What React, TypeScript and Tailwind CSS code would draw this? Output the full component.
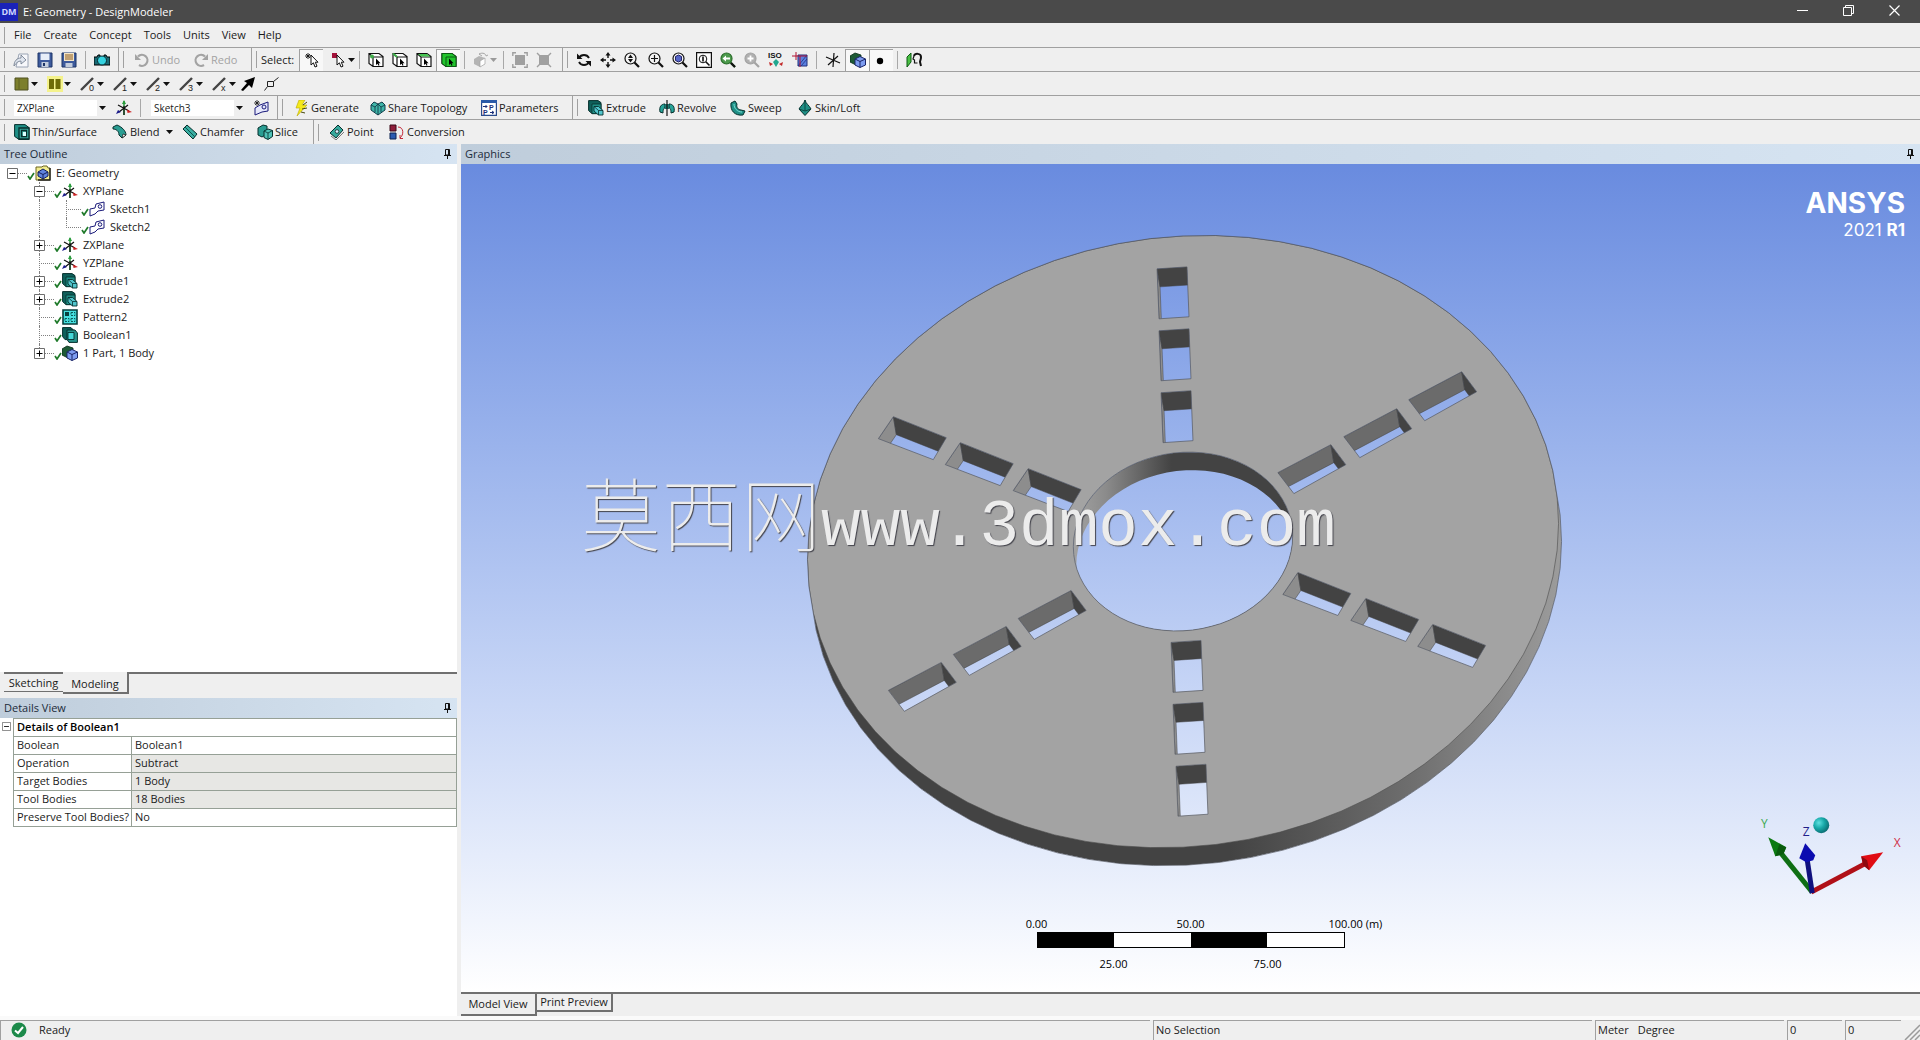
import type { ReactNode } from "react";

const TEAL = "#1f8f86";
const TEAL_DARK = "#0f5f5a";

function Svg({ children, className = "h-4 w-4" }: { children: ReactNode; className?: string }) {
  return (
    <svg viewBox="0 0 16 16" className={`${className} shrink-0`} fill="none" aria-hidden="true">
      {children}
    </svg>
  );
}

function Lens({ color = "#111", fill = "#f4f4f4", children }: { color?: string; fill?: string; children?: ReactNode }) {
  return (
    <Svg>
      <circle cx="6.5" cy="6.5" r="5.5" fill={fill} stroke={color} strokeWidth="1.2" />
      <path d="M10.5 10.5 15 15" stroke={color} strokeWidth="2.2" />
      {children}
    </Svg>
  );
}

function BoxPick({ face }: { face: ReactNode }) {
  return (
    <Svg>
      <path d="M1 1.5h10l4 3v10H5l-4-3zM5 5h10M5 5v9.5M5 5 1 1.5" stroke="#111" strokeWidth="1.2" fill="#fff" />
      {face}
      <path d="M8 6.5v6.5l1.6-1.3.9 2 1-.5-.9-1.9h2z" fill="#000" />
    </Svg>
  );
}

function Line({ mark }: { mark: string }) {
  return (
    <Svg>
      <path d="M1 14 13 2" stroke="#444" strokeWidth="2.4" />
      <text x="9" y="15" fontSize="9" fill="#222" fontFamily="Liberation Sans, sans-serif">
        {mark}
      </text>
    </Svg>
  );
}

const ICONS: Record<string, ReactNode> = {
  newSketch: (
    <Svg>
      <path d="M6 2h9v13H3z" fill="#f7f8fb" stroke="#9aa4b4" />
      <path d="M1 14c0-5 3-8 7-8V3l5 5-5 4V9c-3 0-5 2-7 5z" fill="#dfe5ee" stroke="#6b7688" strokeWidth=".8" />
    </Svg>
  ),
  save: (
    <Svg>
      <path d="M1 1h14v14H1z" fill="#3d5a9c" stroke="#1d3467" />
      <path d="M3.500 1.500h9V8h-9z" fill="#e8eef8" />
      <path d="M4.500 10h7v5h-7z" fill="#c3cddd" />
      <path d="M6 11h2v3H6z" fill="#1d3467" />
    </Svg>
  ),
  saveAs: (
    <Svg>
      <path d="M1 1h14v14H1z" fill="#3d5a9c" stroke="#1d3467" />
      <path d="M3 1h10v8H3z" fill="#f4e6c8" />
      <path d="M4 3h8M4 5h8M4 7h8" stroke="#8c5a1c" />
      <path d="M4.500 11h7v4h-7z" fill="#c3cddd" />
    </Svg>
  ),
  camera: (
    <Svg>
      <path d="M0 5h3l1-2h2v2h4V3h2l1 2h3v8H0z" fill="#1a6a74" stroke="#000" />
      <circle cx="8" cy="8.500" r="4.500" fill="#35d3e0" stroke="#0a2a30" />
    </Svg>
  ),
  undo: (
    <Svg>
      <path d="M4 4.500a5.500 5.500 0 1 1 1 8.500" stroke="#a3a3a3" strokeWidth="2.200" />
      <path d="M1 2v6h6z" fill="#a3a3a3" />
    </Svg>
  ),
  redo: (
    <Svg>
      <path d="M12 4.500a5.500 5.500 0 1 0-1 8.500" stroke="#a3a3a3" strokeWidth="2.200" />
      <path d="M15 2v6H9z" fill="#a3a3a3" />
    </Svg>
  ),
  pick: (
    <Svg>
      <path d="M4 1v6M1 4h6M2 2l4 4M6 2 2 6" stroke="#111" strokeWidth=".9" />
      <path d="M7 3v10l2.400-2.200L11 15l2-.8-1.700-4H14z" fill="#fff" stroke="#111" />
    </Svg>
  ),
  pickMode: (
    <Svg>
      <path d="M1 1h5v5H1z" fill="#a3123a" />
      <path d="M6 3v10l2.400-2.200L10 15l2-.8-1.700-4H13z" fill="#fff" stroke="#111" />
    </Svg>
  ),
  boxPoint: <BoxPick face={<circle cx="4" cy="4.500" r="2" fill="#3fae49" />} />,
  boxEdge: <BoxPick face={<path d="M1 1.500 5 5" stroke="#3fae49" strokeWidth="2" />} />,
  boxFace: <BoxPick face={<path d="M2 2h9l3.500 2.500H5z" fill="#46c552" />} />,
  boxBody: <BoxPick face={<path d="M1 1.500h10l4 3v10H5l-4-3zM5 5h10M5 5v9.500" fill="#23c52e" stroke="#0b5d12" />} />,
  grayCube: (
    <Svg>
      <path d="M1 7l5-3 6 2v6l-5 3-6-3z" fill="#b4b4b4" />
      <path d="M7 9l5-3v6l-5 3z" fill="#fff" stroke="#a5a5a5" strokeWidth=".7" />
      <path d="M6 2c4-2 7 0 7 2l2-1M6 2l3 2" stroke="#a5a5a5" />
    </Svg>
  ),
  expandSel: (
    <Svg>
      <path d="M3 3h10v10H3z" fill="#a0a0a0" />
      <path d="M.8 4V.8H4M12 .8h3.200V4M15.200 12v3.200H12M4 15.200H.8V12" stroke="#a0a0a0" strokeWidth="1.400" />
    </Svg>
  ),
  shrinkSel: (
    <Svg>
      <path d="M3 3h10v10H3z" fill="#a0a0a0" />
      <path d="M1 1l4 4M15 1l-4 4M15 15l-4-4M1 15l4-4" stroke="#a0a0a0" strokeWidth="1.400" />
    </Svg>
  ),
  rotate: (
    <Svg>
      <path d="M3 6c2-4 8-4 10 0M13 10c-2 4-8 4-10 0" stroke="#111" strokeWidth="1.800" />
      <path d="M1 1.500v5.500h5.500zM15 14.500V9H9.500z" fill="#111" />
    </Svg>
  ),
  pan: (
    <Svg>
      <path d="M8 3v3M8 10v3M3 8h3M10 8h3" stroke="#111" strokeWidth="1.400" />
      <path d="M8 0l2.500 3.500h-5zM8 16l2.500-3.500h-5zM0 8l3.500-2.500v5zM16 8l-3.500-2.500v5z" fill="#111" />
    </Svg>
  ),
  zoom: (
    <Lens>
      <path d="M6.500 2.500 9 6H4zM6.500 10.500 9 7H4z" fill="#111" />
    </Lens>
  ),
  zoomIn: (
    <Lens>
      <path d="M6.500 3v7M3 6.500h7" stroke="#111" strokeWidth="1.200" />
    </Lens>
  ),
  zoomBody: (
    <Lens>
      <path d="M6.500 3 9.500 4.500v4l-3 1.500-3-1.500v-4z" fill="#5566c8" stroke="#22226a" />
    </Lens>
  ),
  zoomBox: (
    <Svg>
      <path d="M.6.6h14.800v14.800H.6z" stroke="#111" strokeWidth="1.200" fill="#fff" />
      <circle cx="7" cy="7" r="3.800" stroke="#111" />
      <path d="M7 4.500v5M9.800 9.800 13.500 13.500" stroke="#111" strokeWidth="1.600" />
    </Svg>
  ),
  zoomPrev: (
    <Lens color="#2b6e2b" fill="#4c9a4c">
      <path d="M2.500 6.500 6 3.500v2h4v2H6v2z" fill="#fff" />
      <path d="M11 11l4 4" stroke="#111" strokeWidth="2.200" />
    </Lens>
  ),
  zoomNext: (
    <Lens color="#a3a3a3" fill="#b0b0b0">
      <path d="M6.500 3.500v6M3.500 6.500h6" stroke="#fff" strokeWidth="1.800" />
    </Lens>
  ),
  iso: (
    <Svg>
      <text x="0" y="6" fontSize="8" fontWeight="700" fill="#111" fontFamily="Liberation Sans, sans-serif">
        ISO
      </text>
      <path d="M8 7l3 3-3 5-3-5z" fill="#22a78f" />
      <path d="M1 10l4 2-3 2zM15 10l-4 2 3 2z" fill="#c22a2a" />
    </Svg>
  ),
  plane: (
    <Svg>
      <path d="M6 3h9v11H6z" fill="#5a7fe0" stroke="#20307c" />
      <path d="M6 14 15 3M9 14l6-7" stroke="#20307c" strokeWidth=".8" />
      <path d="M4 0v8M0 4h15M8 4v11" stroke="#b01030" />
    </Svg>
  ),
  cross: (
    <Svg>
      <path d="M9 1 8 15M1 5l14 6M13 4 3 13" stroke="#111" strokeWidth="1.200" />
    </Svg>
  ),
  part: (
    <Svg>
      <path d="M0 4l5-3 6 2v7l-5 3-6-3z" fill="#1d5a35" stroke="#062b16" strokeWidth=".8" />
      <path d="M5 7l5-2.500L15.500 7v6L10 15.500 5 13z" fill="#7d9cf0" stroke="#1a2468" />
      <path d="M5 7l5 2.500L15.500 7M10 9.500v6" stroke="#1a2468" />
    </Svg>
  ),
  dot: (
    <Svg>
      <circle cx="6" cy="9" r="3.200" fill="#000" />
    </Svg>
  ),
  lookAt: (
    <Svg>
      <path d="M1 5l4-4v9l-4 5z" fill="#49c043" stroke="#0d5a12" />
      <path d="M8 4c1-3 7-3 7 1 0 3-1 3-1 5l1 4" stroke="#111" strokeWidth="2" />
      <path d="M8 4 7 7l1.500 1v3h3" stroke="#111" strokeWidth="1.200" />
    </Svg>
  ),
  olive: (
    <Svg>
      <path d="M1 2h13v12H1z" fill="#7c7f2c" stroke="#4e5120" />
      <path d="M5 3v10" stroke="#5f6322" />
    </Svg>
  ),
  oliveGlow: (
    <Svg>
      <path d="M0 0h16v16H0z" fill="#f7f34a" opacity=".6" />
      <path d="M2 3h5v10H2zM8.500 3h5v10h-5z" fill="#6e6c08" />
    </Svg>
  ),
  line0: <Line mark="0" />,
  line1: <Line mark="1" />,
  line2: <Line mark="2" />,
  line3: <Line mark="3" />,
  lineX: <Line mark="x" />,
  arrow: (
    <Svg>
      <path d="M15 1 4 5l3 2-6 7 2 1 6-6 3 3z" fill="#000" />
    </Svg>
  ),
  vertex: (
    <Svg>
      <path d="M3.500 5.500h6v5h-6zM9.500 5.500l5-4M3.500 10.500l-3 4" stroke="#222" />
    </Svg>
  ),
  axes: (
    <Svg>
      <path d="M8 1v14" stroke="#1b8d2f" strokeWidth="1.400" />
      <path d="M2 5l11 6M12 5 3 12" stroke="#111" strokeWidth="1.200" />
      <path d="M8 0l2 4H6z" fill="#2a9d3c" />
      <path d="M16 12l-5-2.500.5 3.500z" fill="#c22" />
      <path d="M0 14l2-4 3 2z" fill="#1a1a8a" />
      <path d="M8 6v9" stroke="#111" strokeWidth="1.200" />
    </Svg>
  ),
  sketch: (
    <Svg>
      <path d="M1 8l5-1 1-4 8-2v8l-6 1-3 3-5 2z" stroke="#1a1a7a" fill="#fff" />
      <circle cx="11" cy="5.500" r="1.800" stroke="#1a1a7a" />
    </Svg>
  ),
  newSketchPlane: (
    <Svg>
      <path d="M2 8l5-3 8-3v9l-6 1-7 3z" stroke="#1a1a7a" fill="#e6e8fb" />
      <circle cx="11" cy="7" r="2" stroke="#1a1a7a" />
      <path d="M4 0v6M1 3h6M2 1l4 4M6 1 2 5" stroke="#111" strokeWidth=".8" />
    </Svg>
  ),
  bolt: (
    <Svg>
      <path d="M6 0h6l-3 5h5L4 16l3-8H3z" fill="#f5ea1a" stroke="#b8a800" strokeWidth=".6" />
      <path d="M14 2l-4 3M14 8l-5 1M12 13l-4-1" stroke="#4a4a10" />
    </Svg>
  ),
  share: (
    <Svg>
      <path d="M1 5l3-3 4 2 4-2 3 3v5l-7 5-7-5z" fill="#3fb5a8" stroke="#123d4a" />
      <path d="M1 5l4 2 3-3 3 3 4-2M5 7v5M11 7v5M8 4v11" stroke="#123d4a" strokeWidth=".9" />
    </Svg>
  ),
  params: (
    <Svg>
      <path d="M.6.6h14.800v14.800H.6z" fill="#fff" stroke="#2a4a8c" strokeWidth="1.200" />
      <path d="M0 0h16v3H0z" fill="#2a5aa8" />
      <text x="8" y="10" fontSize="7" fontWeight="700" fill="#1a2f7a" fontFamily="Liberation Sans, sans-serif">
        P
      </text>
      <text x="2" y="15" fontSize="7" fontWeight="700" fill="#1a2f7a" fontFamily="Liberation Sans, sans-serif">
        P
      </text>
      <path d="M2 6.500h4M4.500 5l1.500 1.500L4.500 8M9 12.500h4M11 11l2 1.500-2 1.500" stroke="#1a2f7a" />
    </Svg>
  ),
  extrude: (
    <Svg>
      <path d="M.6.6H10l3 2v11H4l-3.400-3z" fill={TEAL_DARK} stroke="#062f2c" />
      <path d="M4 4h9v9.600H4z" fill={TEAL} stroke="#062f2c" strokeWidth=".8" />
      <path d="M6 6.500h4.500l4.500 4V15h-4.500L6 11z" fill="#52c5cd" stroke="#06302e" strokeWidth=".9" />
      <path d="M10.500 10.500H15M10.500 10.500V15M10.500 10.500 6 6.500" stroke="#06302e" strokeWidth=".8" />
    </Svg>
  ),
  revolve: (
    <Svg>
      <path d="M1 12c-1-5 1-8 5-8v4c-1 0-2 1-2 5zM15 12c1-5-1-8-5-8v4c1 0 2 1 2 5z" fill="#27a398" stroke="#062f2c" />
      <path d="M6 4h4v5H6z" fill="#1c776f" />
      <path d="M8 0v16" stroke="#111" strokeWidth="1.200" />
    </Svg>
  ),
  sweep: (
    <Svg>
      <path d="M1 3l4-2 2 3c-1 3 1 6 4 6l4 1-2 4C5 16 0 11 1 3z" fill="#1f8f86" stroke="#062f2c" />
      <path d="M4 4c0 4 3 8 8 8" stroke="#7de0d6" />
    </Svg>
  ),
  loft: (
    <Svg>
      <path d="M8 0c1 4 4 5 6 9l-6 6.500L2 9c2-4 5-5 6-9z" fill="#1f8f86" stroke="#062f2c" />
      <path d="M2 9l6 2 6-2M8 0v11" stroke="#0a4a44" />
    </Svg>
  ),
  thin: (
    <Svg>
      <path d="M.6.6H11l4 3v11.800H5l-4.400-3z" fill={TEAL} stroke="#062f2c" />
      <path d="M5 4h10v11H5zM7.500 6.500h5v6h-5z" stroke="#062f2c" strokeWidth="1.300" fill="#3aa79d" />
      <path d="M9 8h3v4H9z" fill="#dff" />
    </Svg>
  ),
  blend: (
    <Svg>
      <path d="M1 3l4-2c5 2 9 6 9 10l-4 3-3-3c0-4-3-6-6-6z" fill="#2a9d92" stroke="#062f2c" />
      <path d="M10 14l4-3-3-1z" fill="#fff" stroke="#111" strokeWidth=".7" />
    </Svg>
  ),
  chamfer: (
    <Svg>
      <path d="M1 5l4-4 10 9-4 5z" fill="#3aaea2" stroke="#062f2c" />
      <path d="M3 3l10 10" stroke="#0d544e" />
    </Svg>
  ),
  slice: (
    <Svg>
      <path d="M1 4l5-3 4 1v8l-5 3-4-2z" fill="#2a9d92" stroke="#062f2c" />
      <path d="M7 7l4-2 4.500 1.500v6L11 15.500 7 13.500z" fill="#4fc2b6" stroke="#062f2c" />
      <path d="M7 7l4 2 4.500-2.500M11 9v6" stroke="#062f2c" strokeWidth=".8" />
    </Svg>
  ),
  point: (
    <Svg>
      <path d="M1 9 9 1l5 5-7 8z" fill="#36a99d" stroke="#062f2c" />
      <path d="M2 12l5 4 8-8" stroke="#777" />
      <circle cx="8" cy="7.500" r="1.800" fill="#d8f0ff" stroke="#111" strokeWidth=".7" />
    </Svg>
  ),
  conversion: (
    <Svg>
      <path d="M1 1h6v6H1z" fill="#8f1d3a" stroke="#3a0a18" />
      <path d="M1 9h6v6H1z" fill="#2a5ab0" stroke="#0c2250" />
      <path d="M9 3c6 0 6 8 2 11M11 11v3.500h3" stroke="#c22a3a" />
    </Svg>
  ),
  root: (
    <Svg>
      <path d="M1 2h6l1-1h4l1 2h2v12H1z" fill="#f2ec8e" stroke="#6b6420" />
      <path d="M3 7l5-3 5 3v4l-5 3-5-3z" fill="#5f83de" stroke="#15205e" />
      <path d="M3 7l5 2.500L13 7M8 9.500V14" stroke="#15205e" />
      <path d="M15 3v12H3" stroke="#222" strokeWidth="1.400" />
    </Svg>
  ),
  pattern: (
    <Svg>
      <path d="M1 1h14v14H1z" fill="#46e0e0" stroke="#083e3c" strokeWidth="1.600" />
      <path d="M3 3h4v4H3z" fill="#06403e" />
      <path d="M9 3.500h4v3H9zM3 9.500h4v3H3zM9 9.500h4v3H9z" stroke="#0a5a58" strokeDasharray="2 1" />
    </Svg>
  ),
  boolean: (
    <Svg>
      <path d="M.6.6H9l3 3v9H3l-2.400-3z" fill={TEAL_DARK} stroke="#062f2c" />
      <path d="M5 3h8l2.400 3v9.400H7l-2-3z" fill="#27928a" stroke="#062f2c" />
      <path d="M6 5.500h6v7H6z" fill="#45d6d6" stroke="#062f2c" strokeWidth=".9" />
    </Svg>
  ),
};

function Caret({ muted }: { muted?: boolean }) {
  return (
    <svg viewBox="0 0 7 4" className="h-1 w-[7px] shrink-0" aria-hidden="true">
      <path d="M0 0h7L3.500 4z" fill={muted ? "#9a9a9a" : "#111"} />
    </svg>
  );
}

function Grip() {
  return <span className="mx-1 h-[17px] w-px shrink-0 bg-[#a0a0a0]" />;
}

function Sep() {
  return <span className="mx-1 h-[18px] w-px shrink-0 bg-[#a8a8a8]" />;
}

function GroupEnd() {
  return <span className="h-full w-px shrink-0 bg-[#a0a0a0]" />;
}

function Tool({ icon, label, caret, muted, pressed }: { icon: string; label: string; caret?: boolean; muted?: boolean; pressed?: boolean }) {
  return (
    <button
      type="button"
      aria-label={label}
      className={`flex h-[22px] shrink-0 items-center ${caret ? "w-7 gap-px pl-1" : "w-6 justify-center"} ${
        pressed ? "border-t border-l border-[#a0a0a0] bg-[#f8f8f8]" : ""
      }`}
    >
      {ICONS[icon]}
      {caret && <Caret muted={muted} />}
    </button>
  );
}

function TextTool({ icon, label, width, caret, muted }: { icon: string; label: string; width: string; caret?: boolean; muted?: boolean }) {
  return (
    <button type="button" disabled={muted} className={`flex h-[22px] shrink-0 items-center gap-0.5 ${width} ${muted ? "text-[#a3a3a3]" : ""}`}>
      {ICONS[icon]}
      <span className="whitespace-nowrap">{label}</span>
      {caret && (
        <span className="ml-1">
          <Caret />
        </span>
      )}
    </button>
  );
}

function Combo({ label, value }: { label: string; value: string }) {
  return (
    <div className="relative h-4 w-[92px] shrink-0">
      <select aria-label={label} defaultValue={value} className="h-4 w-[83px] appearance-none bg-white pl-[3px] text-[10px] leading-4 outline-none">
        <option>{value}</option>
      </select>
      <span className="pointer-events-none absolute top-1.5 right-0 flex">
        <Caret />
      </span>
    </div>
  );
}

const MENUS = ["File", "Create", "Concept", "Tools", "Units", "View", "Help"];

function TitleBar() {
  return (
    <header className="flex h-[23px] items-center justify-between bg-[#4a4a4a] text-white">
      <div className="flex items-center">
        <span className="flex h-[18px] w-[18px] items-center justify-center bg-[#1a22b8] text-[9px] font-bold text-[#cfd6ff]">DM</span>
        <h1 className="ml-[5px] text-[11px]">E: Geometry - DesignModeler</h1>
      </div>
      <div className="flex h-full items-center pr-[3px] pb-[3px]">
        <button type="button" aria-label="Minimize" className="flex w-[46px] justify-center">
          <svg viewBox="0 0 11 11" className="h-[11px] w-[11px]" fill="none"><path d="M0 5.500h11" stroke="#fff" /></svg>
        </button>
        <button type="button" aria-label="Restore" className="flex w-[46px] justify-center">
          <svg viewBox="0 0 11 11" className="h-[11px] w-[11px]" fill="none"><path d="M.5 2.500h8v8h-8zM2.500 2.500v-2h8v8h-2" stroke="#fff" /></svg>
        </button>
        <button type="button" aria-label="Close" className="flex w-[46px] justify-center">
          <svg viewBox="0 0 11 11" className="h-[11px] w-[11px]" fill="none"><path d="M.5.5l10 10M10.500.5l-10 10" stroke="#fff" strokeWidth="1.200" /></svg>
        </button>
      </div>
    </header>
  );
}

function Toolbars() {
  return (
    <div className="bg-[#efefef]">
      <nav className="flex h-[25px] items-center border-b border-[#a0a0a0]">
        <Grip />
        <div className="flex gap-3 pl-[5px]">
          {MENUS.map((m) => (
            <button key={m} type="button">{m}</button>
          ))}
        </div>
      </nav>

      <div className="flex h-6 items-center border-b border-[#a0a0a0]">
        <Grip />
        <Tool icon="newSketch" label="New" />
        <Tool icon="save" label="Save" />
        <Tool icon="saveAs" label="Save As" />
        <Sep />
        <Tool icon="camera" label="Image Capture" />
        <span className="w-1" />
        <GroupEnd />
        <Grip />
        <span className="w-1.5" />
        <TextTool icon="undo" label="Undo" width="w-[59px]" muted />
        <TextTool icon="redo" label="Redo" width="w-[58px]" muted />
        <GroupEnd />
        <Grip />
        <span className="w-[38px]">Select:</span>
        <Tool icon="pick" label="New Selection" pressed />
        <span className="w-1" />
        <Tool icon="pickMode" label="Select Mode" caret />
        <Sep />
        <Tool icon="boxPoint" label="Points" />
        <Tool icon="boxEdge" label="Edges" />
        <Tool icon="boxFace" label="Faces" />
        <Tool icon="boxBody" label="Bodies" pressed />
        <Sep />
        <Tool icon="grayCube" label="Extend Selection" caret muted />
        <span className="w-0.5" />
        <Sep />
        <Tool icon="expandSel" label="Expand" />
        <Tool icon="shrinkSel" label="Shrink" />
        <span className="w-1.5" />
        <GroupEnd />
        <Grip />
        <Tool icon="rotate" label="Rotate" />
        <Tool icon="pan" label="Pan" />
        <Tool icon="zoom" label="Zoom" />
        <Tool icon="zoomIn" label="Box Zoom" />
        <Tool icon="zoomBody" label="Zoom to Body" />
        <Tool icon="zoomBox" label="Zoom to Fit" />
        <Tool icon="zoomPrev" label="Previous View" />
        <Tool icon="zoomNext" label="Next View" />
        <Tool icon="iso" label="ISO View" />
        <Tool icon="plane" label="Display Plane" />
        <Sep />
        <Tool icon="cross" label="Display Axes" />
        <Tool icon="part" label="Display Model" pressed />
        <Tool icon="dot" label="Display Points" pressed />
        <Sep />
        <Tool icon="lookAt" label="Look At" />
      </div>

      <div className="flex h-6 items-center border-b border-[#a0a0a0]">
        <Grip />
        <div className="flex gap-[5px] pl-px">
          <Tool icon="olive" label="Face Coloring" caret />
          <Tool icon="oliveGlow" label="Edge Coloring" caret />
          <Tool icon="line0" label="Edge 0" caret />
          <Tool icon="line1" label="Edge 1" caret />
          <Tool icon="line2" label="Edge 2" caret />
          <Tool icon="line3" label="Edge 3" caret />
          <Tool icon="lineX" label="Edge X" caret />
        </div>
        <Tool icon="arrow" label="Edge Direction" />
        <Tool icon="vertex" label="Display Vertices" />
      </div>

      <div className="flex h-6 items-center border-b border-[#a0a0a0]">
        <Grip />
        <span className="w-[5px]" />
        <Combo label="Plane" value="ZXPlane" />
        <span className="w-1.5" />
        <Tool icon="axes" label="New Plane" />
        <Sep />
        <span className="w-1.5" />
        <Combo label="Sketch" value="Sketch3" />
        <span className="w-1.5" />
        <Tool icon="newSketchPlane" label="New Sketch" />
        <span className="w-1" />
        <GroupEnd />
        <Grip />
        <span className="w-1.5" />
        <TextTool icon="bolt" label="Generate" width="w-[77px]" />
        <TextTool icon="share" label="Share Topology" width="w-[111px]" />
        <TextTool icon="params" label="Parameters" width="w-[91px]" />
        <GroupEnd />
        <Grip />
        <span className="w-1.5" />
        <TextTool icon="extrude" label="Extrude" width="w-[71px]" />
        <TextTool icon="revolve" label="Revolve" width="w-[71px]" />
        <TextTool icon="sweep" label="Sweep" width="w-[67px]" />
        <TextTool icon="loft" label="Skin/Loft" width="w-[70px]" />
      </div>

      <div className="flex h-6 items-center">
        <Grip />
        <span className="w-[5px]" />
        <TextTool icon="thin" label="Thin/Surface" width="w-[98px]" />
        <TextTool icon="blend" label="Blend" width="w-[70px]" caret />
        <TextTool icon="chamfer" label="Chamfer" width="w-[75px]" />
        <TextTool icon="slice" label="Slice" width="w-[56px]" />
        <GroupEnd />
        <Grip />
        <span className="w-1.5" />
        <TextTool icon="point" label="Point" width="w-[60px]" />
        <TextTool icon="conversion" label="Conversion" width="w-[80px]" />
      </div>
    </div>
  );
}

function PanelHeader({ title }: { title: string }) {
  return (
    <div className="flex h-5 shrink-0 items-center justify-between bg-linear-to-r from-[#bfcddb] to-[#d6e4f2] pr-1.5 pl-1 text-[#1c2b3a]">
      <h2>{title}</h2>
      <svg viewBox="0 0 7 10" className="h-2.5 w-[7px]" fill="none" aria-hidden="true">
        <path d="M1.500.5h4v5.500h-4zM0 6.500h7M3.500 6.500V10" stroke="#111" />
        <path d="M4.500 1v5" stroke="#111" />
      </svg>
    </div>
  );
}

type Node = { label: string; icon: string; level: number; box?: "+" | "-"; last?: boolean };

const TREE: Node[] = [
  { label: "E: Geometry", icon: "root", level: 0, box: "-" },
  { label: "XYPlane", icon: "axes", level: 1, box: "-" },
  { label: "Sketch1", icon: "sketch", level: 2 },
  { label: "Sketch2", icon: "sketch", level: 2, last: true },
  { label: "ZXPlane", icon: "axes", level: 1, box: "+" },
  { label: "YZPlane", icon: "axes", level: 1 },
  { label: "Extrude1", icon: "extrude", level: 1, box: "+" },
  { label: "Extrude2", icon: "extrude", level: 1, box: "+" },
  { label: "Pattern2", icon: "pattern", level: 1 },
  { label: "Boolean1", icon: "boolean", level: 1 },
  { label: "1 Part, 1 Body", icon: "part", level: 1, box: "+", last: true },
];

function ExpandBox({ sign, small }: { sign: "+" | "-"; small?: boolean }) {
  return (
    <svg viewBox="0 0 11 11" className={`relative shrink-0 ${small ? "h-[9px] w-[9px]" : "h-[11px] w-[11px]"}`} fill="none" aria-hidden="true">
      <path d="M.5.5h10v10H.5z" fill="#fff" stroke="#6e6e6e" />
      <path d={sign === "+" ? "M2.500 5.500h6M5.500 2.500v6" : "M2.500 5.500h6"} stroke="#000" />
    </svg>
  );
}

function TreeRow({ node }: { node: Node }) {
  return (
    <li className="flex h-[18px] items-center">
      {Array.from({ length: node.level }, (_, i) => (
        <span key={i} className="relative h-full w-[27px] shrink-0">
          {i === 1 && <span className="absolute inset-y-0 left-3 border-l border-dotted border-[#808080]" />}
        </span>
      ))}
      <span className="relative flex h-full w-[27px] shrink-0 items-center pl-[7px]">
        {node.level > 0 && (
          <span className={`absolute top-0 left-3 border-l border-dotted border-[#808080] ${node.last ? "h-2.5" : "h-full"}`} />
        )}
        <span className="absolute top-[9px] right-0 left-3 border-t border-dotted border-[#808080]" />
        {node.box && <ExpandBox sign={node.box} />}
      </span>
      <svg viewBox="0 0 8 8" className="mt-1.5 h-2 w-2 shrink-0" fill="none" aria-hidden="true">
        <path d="M1 4l2 3 4-6" stroke="#1f7a2a" strokeWidth="1.700" />
      </svg>
      {ICONS[node.icon]}
      <span className="ml-[5px] whitespace-nowrap">{node.label}</span>
    </li>
  );
}

const DETAILS = [
  { name: "Boolean", value: "Boolean1", locked: false },
  { name: "Operation", value: "Subtract", locked: true },
  { name: "Target Bodies", value: "1 Body", locked: true },
  { name: "Tool Bodies", value: "18 Bodies", locked: true },
  { name: "Preserve Tool Bodies?", value: "No", locked: false },
];

function SidePanel() {
  return (
    <aside className="flex w-[457px] shrink-0 flex-col">
      <PanelHeader title="Tree Outline" />
      <ul className="min-h-0 flex-1 bg-white">
        {TREE.map((n) => (
          <TreeRow key={n.label} node={n} />
        ))}
      </ul>
      <div className="flex h-[26px] shrink-0 items-start">
        <button type="button" className="ml-1 h-5 w-[59px] border-t-2 border-b border-[#707070] leading-4">Sketching</button>
        <button type="button" className="h-[22px] w-[66px] border-r-2 border-b-2 border-[#707070] pt-1 leading-4">Modeling</button>
        <span className="h-0.5 flex-1 bg-[#707070]" />
      </div>
      <PanelHeader title="Details View" />
      <div className="flex h-[298px] shrink-0 items-start bg-white">
        <button type="button" aria-label="Collapse" className="mt-1 ml-0.5 flex w-[11px]">
          <ExpandBox sign="-" small />
        </button>
        <table className="flex-1 border-collapse text-[11px] leading-[14px]">
          <thead>
            <tr className="h-[18px]">
              <th colSpan={2} className="border border-[#96a096] pt-0 pb-0.5 pl-[3px] text-left font-semibold text-black">Details of Boolean1</th>
            </tr>
          </thead>
          <tbody>
            {DETAILS.map((d) => (
              <tr key={d.name} className="h-[18px]">
                <td className="w-[118px] border border-[#96a096] pt-0 pb-0.5 pl-[3px] whitespace-nowrap">{d.name}</td>
                <td className={`border border-[#96a096] pt-0 pb-0.5 pl-[3px] ${d.locked ? "bg-[#e7e7e4]" : ""}`}>{d.value}</td>
              </tr>
            ))}
          </tbody>
        </table>
      </div>
    </aside>
  );
}

type Pt = [number, number];

const CENTER: Pt = [1183, 542];
const DEPTH: Pt = [3, 18];
const SEGMENTS = 72;

// Projected circle of the plate; k scales it down for the bore.
function ring(k: number): { p: Pt; facing: boolean }[] {
  const a = 376 * k;
  const skew = -18 * k;
  const h = 306 * k;
  return Array.from({ length: SEGMENTS }, (_, i) => {
    const t = (i / SEGMENTS) * Math.PI * 2;
    const c = Math.cos(t);
    const s = Math.sin(t);
    const nx = skew * -s + h * c;
    const ny = a * s;
    return {
      p: [CENTER[0] + a * c, CENTER[1] + skew * c + h * s] as Pt,
      facing: nx * DEPTH[0] + ny * DEPTH[1] > 0,
    };
  });
}

const shift = (p: Pt): Pt => [p[0] + DEPTH[0], p[1] + DEPTH[1]];
const path = (pts: Pt[]) => "M" + pts.map(([x, y]) => `${x.toFixed(1)} ${y.toFixed(1)}`).join("L") + "Z";

const OUTER = ring(1);
const BORE = ring(0.292);
const face = path(OUTER.map((o) => o.p));
const bore = path(BORE.map((o) => o.p));
const boreBack = path(BORE.map((o) => shift(o.p)));
const hull = path(OUTER.map((o) => (o.facing ? shift(o.p) : o.p)));

type SlotKind = { shape: Pt[]; walls: { edge: [number, number]; fill: string }[]; at: Pt[] };

const SLOTS: SlotKind[] = [
  {
    shape: [[0, 0], [30, -2], [32, 48], [2, 50]],
    walls: [{ edge: [3, 0], fill: "#8f8f8f" }, { edge: [0, 1], fill: "#434343" }],
    at: [[1157, 269], [1159, 331], [1161, 393], [1171, 643], [1173, 705], [1176, 767]],
  },
  {
    shape: [[0, 0], [53, -28], [68, -8], [16, 21]],
    walls: [{ edge: [0, 1], fill: "#6b6b6b" }, { edge: [1, 2], fill: "#434343" }],
    at: [[1409, 400], [1344, 437], [1278, 473], [1018, 619], [953, 655], [888, 691]],
  },
  {
    shape: [[0, 0], [53, 21], [40, 43], [-15, 22]],
    walls: [{ edge: [3, 0], fill: "#8d8d8d" }, { edge: [0, 1], fill: "#434343" }],
    at: [[893, 417], [960, 443], [1028, 469], [1298, 573], [1366, 599], [1433, 625]],
  },
];

const HOLES = SLOTS.flatMap((kind) =>
  kind.at.map(([x, y]) => ({ kind, quad: kind.shape.map(([dx, dy]) => [x + dx, y + dy] as Pt) })),
);

function Plate() {
  return (
    <svg viewBox="461 164 1459 829" className="absolute inset-0 h-full w-full" role="img" aria-label="Perforated disc">
      <defs>
        <linearGradient id="rim" gradientUnits="userSpaceOnUse" x1="807" y1="0" x2="1562" y2="0">
          <stop offset="0" stopColor="#434343" />
          <stop offset=".56" stopColor="#434343" />
          <stop offset=".8" stopColor="#6e6e6e" />
          <stop offset="1" stopColor="#9c9c9c" />
        </linearGradient>
        <linearGradient id="boreWall" gradientUnits="userSpaceOnUse" x1="1073" y1="0" x2="1292" y2="0">
          <stop offset="0" stopColor="#a3a3a3" />
          <stop offset=".15" stopColor="#8b8b8b" />
          <stop offset=".45" stopColor="#434343" />
          <stop offset="1" stopColor="#434343" />
        </linearGradient>
        <radialGradient id="ball" cx=".35" cy=".35" r=".7">
          <stop offset="0" stopColor="#5fe0e0" />
          <stop offset=".5" stopColor="#17a8a8" />
          <stop offset="1" stopColor="#0b6a70" />
        </radialGradient>
        <mask id="through">
          <path d={hull} fill="#fff" />
          <path d={bore} fill="#000" />
          {HOLES.map((h, i) => (
            <path key={i} d={path(h.quad)} fill="#000" />
          ))}
        </mask>
        {HOLES.map((h, i) => (
          <clipPath key={i} id={`hole${i}`}>
            <path d={path(h.quad)} />
          </clipPath>
        ))}
        <clipPath id="boreClip">
          <path d={bore} />
        </clipPath>
      </defs>

      <g mask="url(#through)">
        <path d={hull} fill="url(#rim)" />
        <path d={face} fill="#a3a3a3" stroke="#4c4c4c" strokeWidth=".6" />
      </g>
      <path d={hull} fill="none" stroke="#55585f" strokeWidth=".7" />

      <path d={bore + boreBack} fillRule="evenodd" fill="url(#boreWall)" clipPath="url(#boreClip)" />
      <path d={bore} fill="none" stroke="#55585f" strokeWidth=".7" />

      {HOLES.map(({ kind, quad }, i) => (
        <g key={i}>
          <g clipPath={`url(#hole${i})`}>
            {kind.walls.map((w) => {
              const [p, q] = [quad[w.edge[0]], quad[w.edge[1]]];
              return <path key={w.fill} d={path([p, q, shift(q), shift(p)])} fill={w.fill} stroke="#434343" strokeWidth=".5" />;
            })}
          </g>
          <path d={path(quad)} fill="none" stroke="#55585f" strokeWidth=".7" />
        </g>
      ))}

      {/* view triad */}
      <path d="M1813 893 1780 852" stroke="#0f6e14" strokeWidth="5" />
      <path d="M1769 838 1787 848 1784 855 1776 857z" fill="#0c7a12" />
      <path d="M1776 857 1780 845 1787 848 1784 855z" fill="#095a0d" />
      <path d="M1812 893 1867 864" stroke="#b01018" strokeWidth="5" />
      <path d="M1884 853 1862 857 1864 866 1870 871z" fill="#e00c14" />
      <path d="M1862 857 1868 861 1870 871 1864 866z" fill="#8e0a10" />
      <path d="M1813 894 1808 861" stroke="#10107e" strokeWidth="5" />
      <path d="M1806 844 1816 856 1814 861 1807 863 1800 859z" fill="#0c0cb0" />
      <circle cx="1822" cy="826" r="8" fill="url(#ball)" />
      <g fontFamily="Open Sans, sans-serif" fontSize="12" textAnchor="middle">
        <text x="1765" y="829" fill="#3aa850">Y</text>
        <text x="1807" y="837" fill="#20208a">Z</text>
        <text x="1898" y="848" fill="#d03048">X</text>
      </g>
    </svg>
  );
}

function ScaleBar() {
  return (
    <div className="absolute inset-x-0 bottom-5 mx-auto w-[308px] text-black">
      <div className="flex justify-between leading-4">
        <span className="flex w-0 justify-center">0.00</span>
        <span className="flex w-0 justify-center">50.00</span>
        <span className="w-0 whitespace-nowrap">
          <span className="-ml-4">100.00 (m)</span>
        </span>
      </div>
      <div className="grid h-4 grid-cols-4 border border-black bg-white">
        <span className="bg-black" />
        <span />
        <span className="bg-black" />
        <span />
      </div>
      <div className="mt-2 flex justify-around leading-4">
        <span>25.00</span>
        <span>75.00</span>
      </div>
    </div>
  );
}

function Graphics() {
  return (
    <main className="flex min-w-0 flex-1 flex-col">
      <PanelHeader title="Graphics" />
      <div className="relative min-h-0 flex-1 bg-linear-to-b from-[#698bdf] to-white">
        <Plate />
        <div className="absolute top-[22px] right-[15px] flex flex-col items-end font-[Inter,sans-serif] text-white">
          <div className="text-[28px] leading-[34px] font-bold">ANSYS</div>
          <div className="text-[17px] leading-5">
            2021 <b>R1</b>
          </div>
        </div>
        <div className="absolute inset-x-0 top-[306px] mr-[464px] flex items-baseline justify-center whitespace-nowrap text-[#ececec] [text-shadow:1px_1px_1px_#44444c]">
          <span className="font-['Noto_Sans_CJK_SC',sans-serif] text-[80px] leading-[80px] font-thin">莫西网</span>
          <span className="font-['Liberation_Mono',monospace] text-[66px] leading-[80px]">www.3dmox.com</span>
        </div>
        <ScaleBar />
      </div>
      <div className="flex h-6 shrink-0 items-start border-t-2 border-[#707070]">
        <button type="button" className="h-[22px] w-[76px] border-r-2 border-b-2 border-[#707070] leading-5">Model View</button>
        <button type="button" className="h-[18px] w-[76px] border-r-2 border-b-2 border-[#707070] leading-4">Print Preview</button>
      </div>
    </main>
  );
}

function StatusBar() {
  const cell = "flex items-center border-t border-l border-[#a0a0a0] pb-0.5 pl-0.5";
  return (
    <footer className="flex h-6 shrink-0 gap-[3px] border-t-4 border-[#fafafa] bg-[#efefef]">
      <div className="flex flex-1 items-center gap-3 border-t border-l border-[#a0a0a0] pb-0.5 pl-2.5">
        <svg viewBox="0 0 16 16" className="h-4 w-4" fill="none" aria-hidden="true">
          <circle cx="8" cy="8" r="7.500" fill="#1c8a4a" />
          <path d="M4 8.500 7 11l5-6" stroke="#fff" strokeWidth="2" />
        </svg>
        Ready
      </div>
      <div className={`${cell} w-[439px]`}>No Selection</div>
      <div className={`${cell} w-[189px] gap-[9px]`}>
        <span>Meter</span>
        <span>Degree</span>
      </div>
      <div className={`${cell} w-[55px]`}>0</div>
      <div className={`${cell} w-[56px]`}>0</div>
      <svg viewBox="0 0 16 16" className="mt-1 h-4 w-4" fill="none" aria-hidden="true">
        <path d="M1 16 16 1M6 16 16 6M11 16l5-5" stroke="#9a9a9a" strokeWidth="1.500" />
      </svg>
    </footer>
  );
}

export default function App() {
  return (
    <div className="flex h-screen flex-col overflow-hidden bg-[#efefef] font-['Open_Sans',sans-serif] text-[11px] leading-4 text-[#1a1a1a]">
      <TitleBar />
      <Toolbars />
      <div className="flex min-h-0 flex-1 gap-1">
        <SidePanel />
        <Graphics />
      </div>
      <StatusBar />
    </div>
  );
}
